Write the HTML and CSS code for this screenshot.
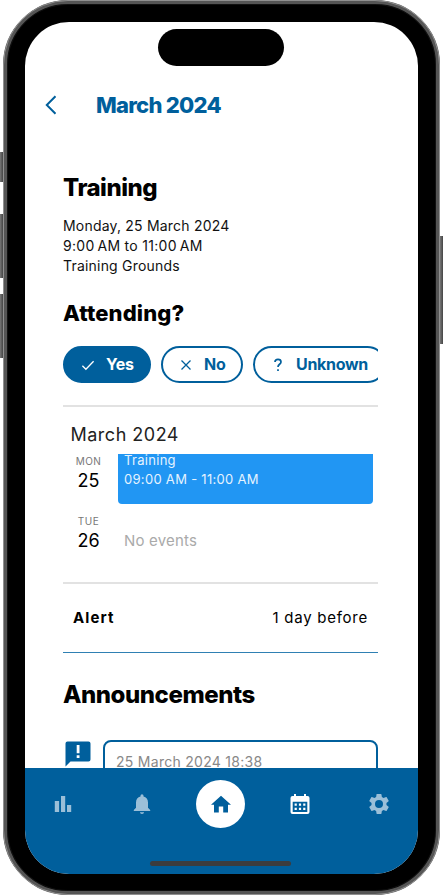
FILE: index.html
```html
<!DOCTYPE html>
<html lang="en">
<head>
<meta charset="utf-8">
<title>Training</title>
<link rel="stylesheet" href="styles.css">
</head>
<body>
<div class="phone">
  <i class="key key-action"></i><i class="key key-up"></i><i class="key key-down"></i><i class="key key-power"></i>
  <div class="screen">
    <div class="island"></div>
    <header class="header">
      <svg class="back" viewBox="0 0 12 20" width="12" height="20"><path d="M10.500 1.200 1.800 10l8.700 8.800"/></svg>
      <h1>March 2024</h1>
    </header>
    <main class="content">
      <h2 class="h-training">Training</h2>
      <div class="details">
        <p>Monday, 25 March 2024</p>
        <p class="hours">9:00&#8201;AM to 11:00&#8201;AM</p>
        <p>Training Grounds</p>
      </div>
      <h2 class="h-attending">Attending?</h2>
      <div class="choices">
        <div class="pill yes"><svg viewBox="0 0 14 14" width="14" height="14"><path d="m1.400 7.800 3.500 3.500 7.700-8"/></svg><span>Yes</span></div>
        <div class="pill no"><svg viewBox="0 0 14 14" width="14" height="14"><path d="m2.500 2.500 9 9m0-9-9 9"/></svg><span>No</span></div>
        <div class="pill unknown"><svg viewBox="0 0 14 14" width="14" height="14"><path class="q" d="M4 4.100C4 2.200 5.200 1.300 7 1.300s3 .9 3 2.600c0 2.300-3 2.400-3 5M7 11.200v1.700"/></svg><span>Unknown</span></div>
      </div>
      <section class="agenda">
        <h3>March 2024</h3>
        <div class="day">
          <div class="date"><small>MON</small><b>25</b></div>
          <div class="event"><p>Training</p><p class="time">09:00 AM - 11:00 AM</p></div>
        </div>
        <div class="day second">
          <div class="date"><small>TUE</small><b>26</b></div>
          <div class="none">No events</div>
        </div>
      </section>
      <div class="alert"><strong>Alert</strong><span>1 day before</span></div>
      <h2 class="h-ann">Announcements</h2>
      <div class="post">
        <svg class="notice" viewBox="0 0 26 26" width="26" height="26"><path fill="#005f9c" d="M2.500.5h21A2 2 0 0 1 25.500 2.500v16a2 2 0 0 1-2 2h-18L.5 25.500v-23a2 2 0 0 1 2-2z"/><path fill="#fff" d="M11.700 4h2.800v8.300h-2.800zM11.700 14.300h2.800v2.800h-2.800z"/></svg>
        <div class="card">25 March 2024 18:38</div>
      </div>
    </main>
    <nav class="nav">
      <div class="tab"><svg viewBox="0 0 18 18" width="18" height="18"><path d="M.8 6h4.300v11H.8zM7 1h4.200v16H7zM13 10h4.200v7H13z"/></svg></div>
      <div class="tab"><svg viewBox="0 0 18 20" width="18" height="20"><path d="M9 20c1.100 0 2-.8 2-1.700H7c0 .9.900 1.700 2 1.700zm6-6.300V8.500c0-3.100-1.700-5.300-4.500-6v-.8a1.500 1.500 0 0 0-3 0v.8C4.700 3.200 3 5.400 3 8.500v5.200L.8 15.900v1.100h16.400v-1.100z"/></svg></div>
      <div class="tab home"><svg viewBox="0 0 22 18" width="22" height="18"><path d="M8.800 17.500v-6h4.400v6H18V9.700h3L11 .8 1 9.700h3v7.800z"/></svg></div>
      <div class="tab on"><svg viewBox="0 0 20 22" width="20" height="22"><path fill-rule="evenodd" d="M4 1h2v2h8V1h2v2h1.500a2 2 0 0 1 2 2v14a2 2 0 0 1-2 2h-15a2 2 0 0 1-2-2V5a2 2 0 0 1 2-2H4zM2.700 8.800V19h14.600V8.800zM4.600 10.500h2.200v2.200H4.600zm4.300 0h2.200v2.200H8.900zm4.300 0h2.200v2.200h-2.200zM4.600 14.800h2.200V17H4.600zm4.300 0h2.200V17H8.900zm4.300 0h2.200V17h-2.200z"/></svg></div>
      <div class="tab"><svg viewBox="2 2 20 20" width="20" height="20"><path d="M19.430 12.980c.04-.32.07-.64.07-.98s-.03-.66-.07-.98l2.110-1.650c.19-.15.240-.42.120-.64l-2-3.460c-.12-.22-.39-.3-.61-.22l-2.490 1c-.52-.4-1.080-.73-1.690-.98l-.38-2.650A.49.490 0 0 0 14 2h-4c-.25 0-.46.180-.49.420l-.38 2.650c-.61.250-1.170.590-1.690.98l-2.490-1c-.23-.09-.49 0-.61.220l-2 3.460c-.13.220-.07.490.12.640l2.110 1.650c-.04.320-.07.650-.07.980s.03.660.07.980l-2.110 1.650c-.19.150-.24.420-.12.640l2 3.460c.12.220.39.300.61.220l2.490-1c.52.400 1.080.730 1.690.98l.38 2.650c.03.240.240.420.49.420h4c.25 0 .46-.18.49-.42l.38-2.650c.61-.25 1.170-.59 1.690-.98l2.490 1c.23.090.49 0 .61-.22l2-3.460c.12-.22.070-.49-.12-.64zM12 16a4 4 0 1 1 0-8 4 4 0 0 1 0 8z"/></svg></div>
      <div class="indicator"></div>
    </nav>
  </div>
</div>
</body>
</html>
```
FILE: styles.css
```css
* { box-sizing: border-box; }
html, body { margin: 0; background: #fff; }
body { font-family: Inter, "Liberation Sans", sans-serif; color: #000; width: 443px; height: 896px; overflow: hidden; }
h1, h2, h3, p { margin: 0; }
svg { display: block; flex: none; }

.phone {
  position: relative;
  width: 437px;
  height: 895px;
  margin-left: 3px;
  padding: 18px;
  border: 4px solid #555;
  border-radius: 65px;
  background: #000;
  box-shadow: inset 0 0 0 1px #111;
  outline: 1px solid #909090;
  outline-offset: -1px;
}
.key { position: absolute; width: 3px; background: linear-gradient(90deg, #777, #444); }
.key-action { left: -7px; top: 148px; height: 30px; }
.key-up { left: -7px; top: 210px; height: 64px; }
.key-down { left: -7px; top: 290px; height: 64px; }
.key-power { right: -7px; top: 232px; height: 108px; }

.screen {
  position: relative;
  display: flex;
  flex-direction: column;
  width: 393px;
  height: 852px;
  border-radius: 44px;
  overflow: hidden;
  background: #fff;
}
.island { position: absolute; left: 132.500px; top: 7px; width: 126px; height: 37px; border-radius: 19px; background: #000; }

.header { display: flex; align-items: center; flex: none; height: 48px; margin-top: 59px; padding-left: 20px; gap: 39px; color: #005f9c; }
.header h1 { font-size: 22px; line-height: 28px; font-weight: 800; letter-spacing: -.75px; white-space: nowrap; }
.back { fill: none; stroke: #005f9c; stroke-width: 2; }

.content { flex: 1; min-height: 0; overflow: hidden; padding: 44px 40px 0 38px; white-space: nowrap; }
h2 { font-size: 24px; line-height: 30px; font-weight: 800; }
.h-training { letter-spacing: -.5px; }
.details { margin-top: 13px; font-size: 14px; line-height: 20px; letter-spacing: .2px; color: #111; }
.details .hours { letter-spacing: .3px; }
.h-attending { margin-top: 22px; font-size: 22px; letter-spacing: .1px; }

.choices { display: flex; gap: 10px; margin-top: 18px; overflow: hidden; }
.pill { display: flex; align-items: center; flex: none; height: 37px; padding-left: 16px; gap: 11px; border: 2px solid #005f9c; border-radius: 19px; color: #005f9c; font-size: 16px; font-weight: 700; letter-spacing: -.3px; }
.pill span { position: relative; top: -1px; }
.pill svg { fill: none; stroke: currentColor; stroke-width: 1.3; }
.pill .q { stroke-width: 1.7; }
.yes { width: 88px; background: #005f9c; color: #fff; }
.no { width: 82px; }
.unknown { width: 133px; }

.agenda { height: 179px; margin-top: 22px; border-top: 2px solid #e2e2e2; border-bottom: 2px solid #e2e2e2; }
.agenda h3 { padding: 15px 0 0 7.500px; font-size: 18px; line-height: 26px; font-weight: 400; letter-spacing: .5px; color: #222; }
.day { display: flex; height: 50px; margin-top: 6px; }
.date { width: 51px; margin-right: 4px; text-align: center; }
.date small { display: block; font-size: 10px; line-height: 14px; letter-spacing: .5px; color: #777; }
.date b { display: block; padding-top: 1px; font-size: 18px; line-height: 24px; font-weight: 400; }
.event { flex: none; width: 255px; padding-left: 6px; overflow: hidden; border-radius: 0 0 4px 4px; background: #2196f3; color: #e5f3ff; font-size: 13px; line-height: 19px; letter-spacing: .3px; }
.event p:first-child { margin-top: -3px; }
.second { margin-top: 10px; }
.none { padding: 17px 0 0 6px; color: #aaa; font-size: 15px; line-height: 20px; letter-spacing: .2px; }

.alert { display: flex; justify-content: space-between; align-items: center; height: 69px; padding: 0 10px 1px; border-bottom: 1px solid #2f80b3; font-size: 15px; letter-spacing: .75px; }
.alert strong { font-weight: 700; letter-spacing: 1.100px; }
.h-ann { margin-top: 27px; letter-spacing: -.45px; }
.post { display: flex; justify-content: space-between; margin-top: 30px; }
.notice { margin: 1px 0 0 2px; }
.card { width: 275px; height: 100px; padding: 10px 0 0 11px; border: 2px solid #005f9c; border-radius: 8px; color: #888; font-size: 14px; line-height: 20px; letter-spacing: .28px; }

.nav { position: relative; display: grid; grid-template-columns: repeat(5, 79px); justify-content: center; flex: none; height: 106px; padding: 12px 2px 0 0; background: #005f9c; }
.tab { display: flex; align-items: center; justify-content: center; height: 48px; fill: #9bbfd8; }
.tab.on { fill: #fff; }
.home { justify-self: center; width: 49px; border-radius: 50%; background: #fff; fill: #005f9c; }
.indicator { position: absolute; left: 125px; bottom: 8px; width: 141px; height: 5px; border-radius: 3px; background: #3c3c3e; }
```
